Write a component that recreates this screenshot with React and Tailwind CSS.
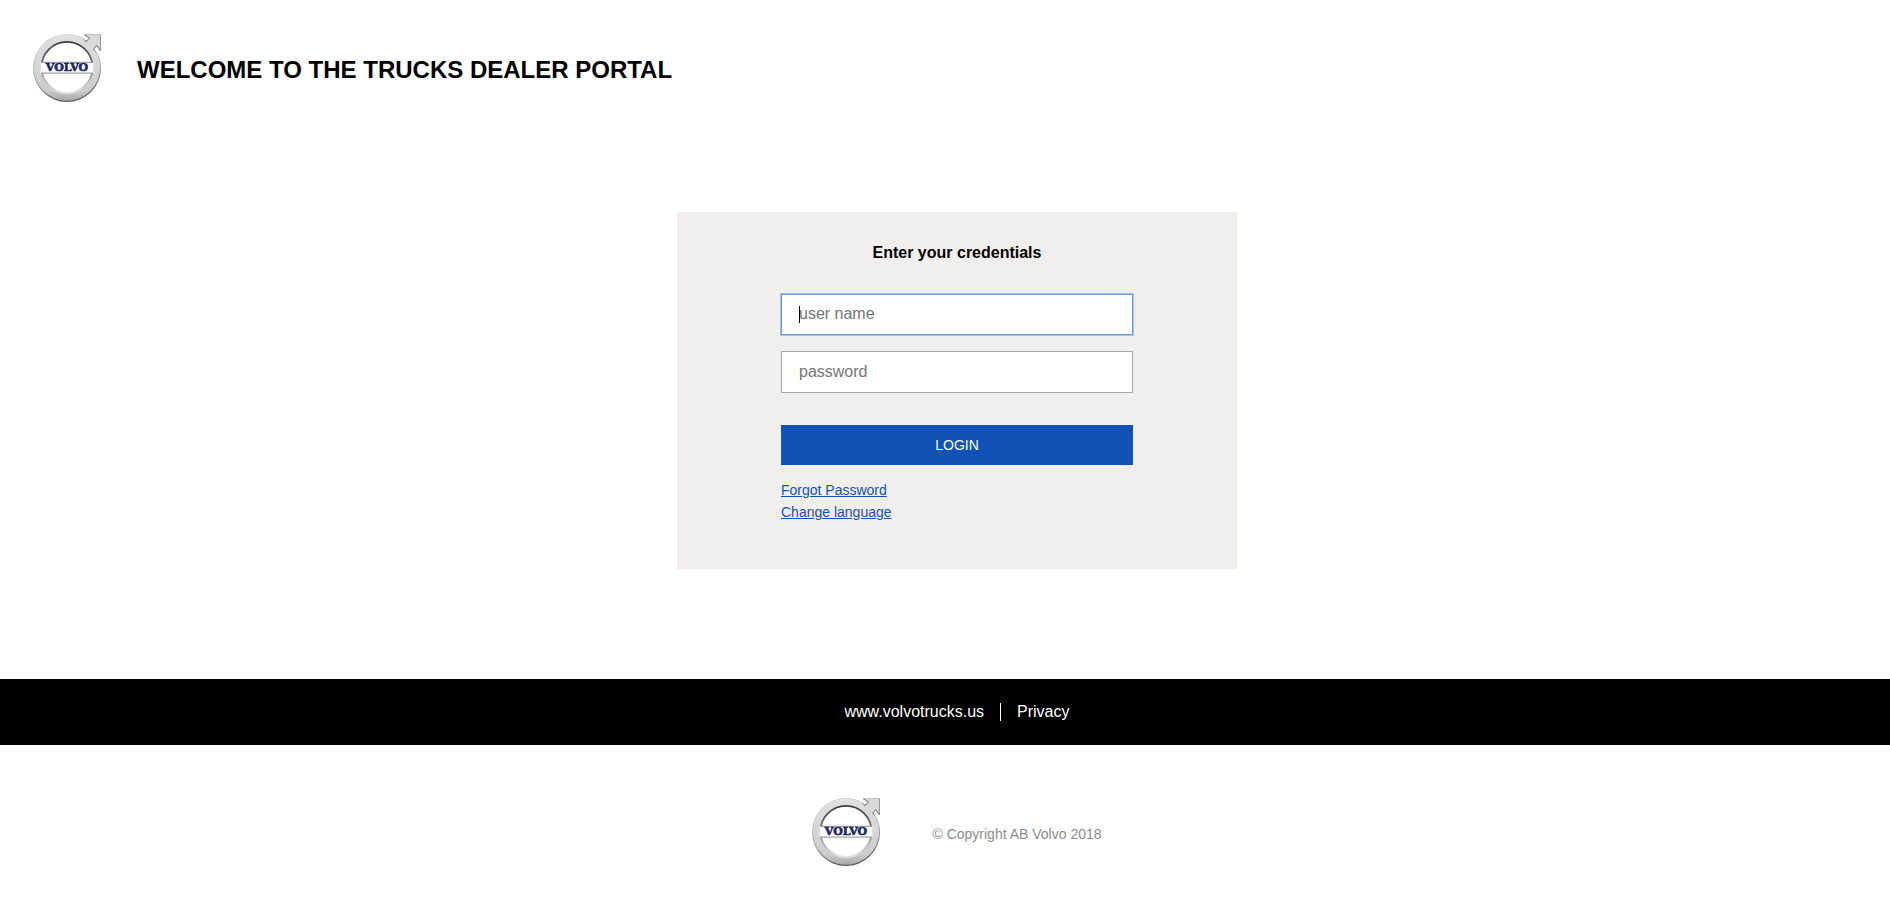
import React from "react";

function VolvoLogo({ id }) {
  const ring = `${id}-ring`;
  const edge = `${id}-edge`;
  const inner = `${id}-inner`;
  return (
    <svg viewBox="0 0 68 68" className="h-[68px] w-[68px] shrink-0" role="img" aria-label="Volvo">
      <defs>
        <linearGradient id={ring} x1="0" y1="0" x2="0" y2="1">
          <stop offset="0" stopColor="#e0e0e0" />
          <stop offset="0.5" stopColor="#d6d6d6" />
          <stop offset="0.85" stopColor="#cbcbcb" />
          <stop offset="1" stopColor="#a8a8a8" />
        </linearGradient>
        <linearGradient id={edge} x1="0" y1="0" x2="0.3" y2="1">
          <stop offset="0" stopColor="#d4d4d4" />
          <stop offset="0.6" stopColor="#a6a6a6" />
          <stop offset="1" stopColor="#5c5c5c" />
        </linearGradient>
        <linearGradient id={inner} x1="0" y1="0" x2="0" y2="1">
          <stop offset="0" stopColor="#3c3c3c" />
          <stop offset="0.45" stopColor="#777777" />
          <stop offset="1" stopColor="#e6e6e6" />
        </linearGradient>
      </defs>
      <circle cx="34" cy="34" r="34" fill={`url(#${edge})`} />
      <circle cx="34" cy="33.6" r="33.2" fill={`url(#${ring})`} />
      <path d="M50.5 0H68V17.5L64 12.5L60.5 16L57 19L49 11L52.5 7.5L56 4.2Z" fill="#d9d9d9" />
      <path d="M49.5 2.2L55.5 4.3L51.8 7Z" fill="#ffffff" />
      <path d="M65.8 18.5L63.7 12.5L61 16.2Z" fill="#ffffff" />
      <path
        d="M51 0.6L56.5 4.2L53 7.4L50.5 5.4M67.5 17L63.8 11.6L60.6 15L62.6 17.6"
        fill="none"
        stroke="#6f6f6f"
        strokeWidth="1"
      />
      <path d="M67.5 0.5V17" stroke="#969696" strokeWidth="1" />
      <path d="M51 0.5H67" stroke="#c2c2c2" strokeWidth="1" />
      <circle cx="34" cy="33.4" r="25.6" fill="#ffffff" stroke={`url(#${inner})`} strokeWidth="1.8" />
      <rect x="7.5" y="28" width="53" height="11.2" fill="#ffffff" />
      <path d="M8 28.3H60M8 39.1H60" stroke="#8c8c8c" strokeWidth="1" />
      <text
        x="34"
        y="37.4"
        textAnchor="middle"
        fill="#1b2668"
        stroke="#1b2668"
        strokeWidth="0.6"
        className="font-['DejaVu_Serif',serif] text-[11px] font-bold"
      >
        VOLVO
      </text>
    </svg>
  );
}

const fieldClass =
  "w-full rounded-none border bg-white px-[17px] text-base text-black placeholder:text-[#757575] placeholder:opacity-100";

export default function App() {
  return (
    <div className="bg-white font-['Liberation_Sans',Arial,sans-serif] text-black">
      <header className="flex items-center gap-9 px-[33px] pt-[34px]">
        <VolvoLogo id="header" />
        <h1 className="pt-1 text-2xl font-bold">WELCOME TO THE TRUCKS DEALER PORTAL</h1>
      </header>

      <main className="flex justify-center pt-[110px] pb-[110px] pl-6">
        <form
          className="flex w-full max-w-[560px] flex-col bg-[#f1efee] px-[104px] pt-[29px] pb-[46px]"
          onSubmit={(event) => event.preventDefault()}
        >
          <h2 className="text-center text-base leading-6 font-bold">Enter your credentials</h2>
          <div className="mt-[29px] flex flex-col gap-4">
            <div className="relative">
              <input
                type="text"
                aria-label="user name"
                placeholder="user name"
                autoFocus
                className={`${fieldClass} block h-[41px] border-[#7398d9] pb-px caret-transparent outline-1 outline-[#a3c1f3]`}
              />
              <span aria-hidden="true" className="absolute top-3 left-[18px] h-[17px] w-px bg-black" />
            </div>
            <input
              type="password"
              aria-label="password"
              placeholder="password"
              className={`${fieldClass} h-[42px] border-[#a7a8a9] outline-none`}
            />
          </div>
          <button type="submit" className="mt-8 h-10 bg-[#1152b6] text-sm text-white">
            LOGIN
          </button>
          <div className="mt-[14px] flex flex-col items-start text-sm leading-[22px] text-[#1152b6]">
            <a href="#forgot" className="underline">Forgot Password</a>
            <a href="#language" className="underline">Change language</a>
          </div>
        </form>
      </main>

      <nav className="flex h-[66px] items-center justify-center bg-black pl-6 text-base text-white">
        <a href="#site" className="border-r border-white pr-4 leading-[18px]">www.volvotrucks.us</a>
        <a href="#privacy" className="pl-4 leading-[18px]">Privacy</a>
      </nav>

      <footer className="flex items-center justify-center gap-[52px] pt-[53px] pb-[53px] pl-6">
        <VolvoLogo id="footer" />
        <p className="pt-1 text-sm text-[#8c8c8c]">© Copyright AB Volvo 2018</p>
      </footer>
    </div>
  );
}
